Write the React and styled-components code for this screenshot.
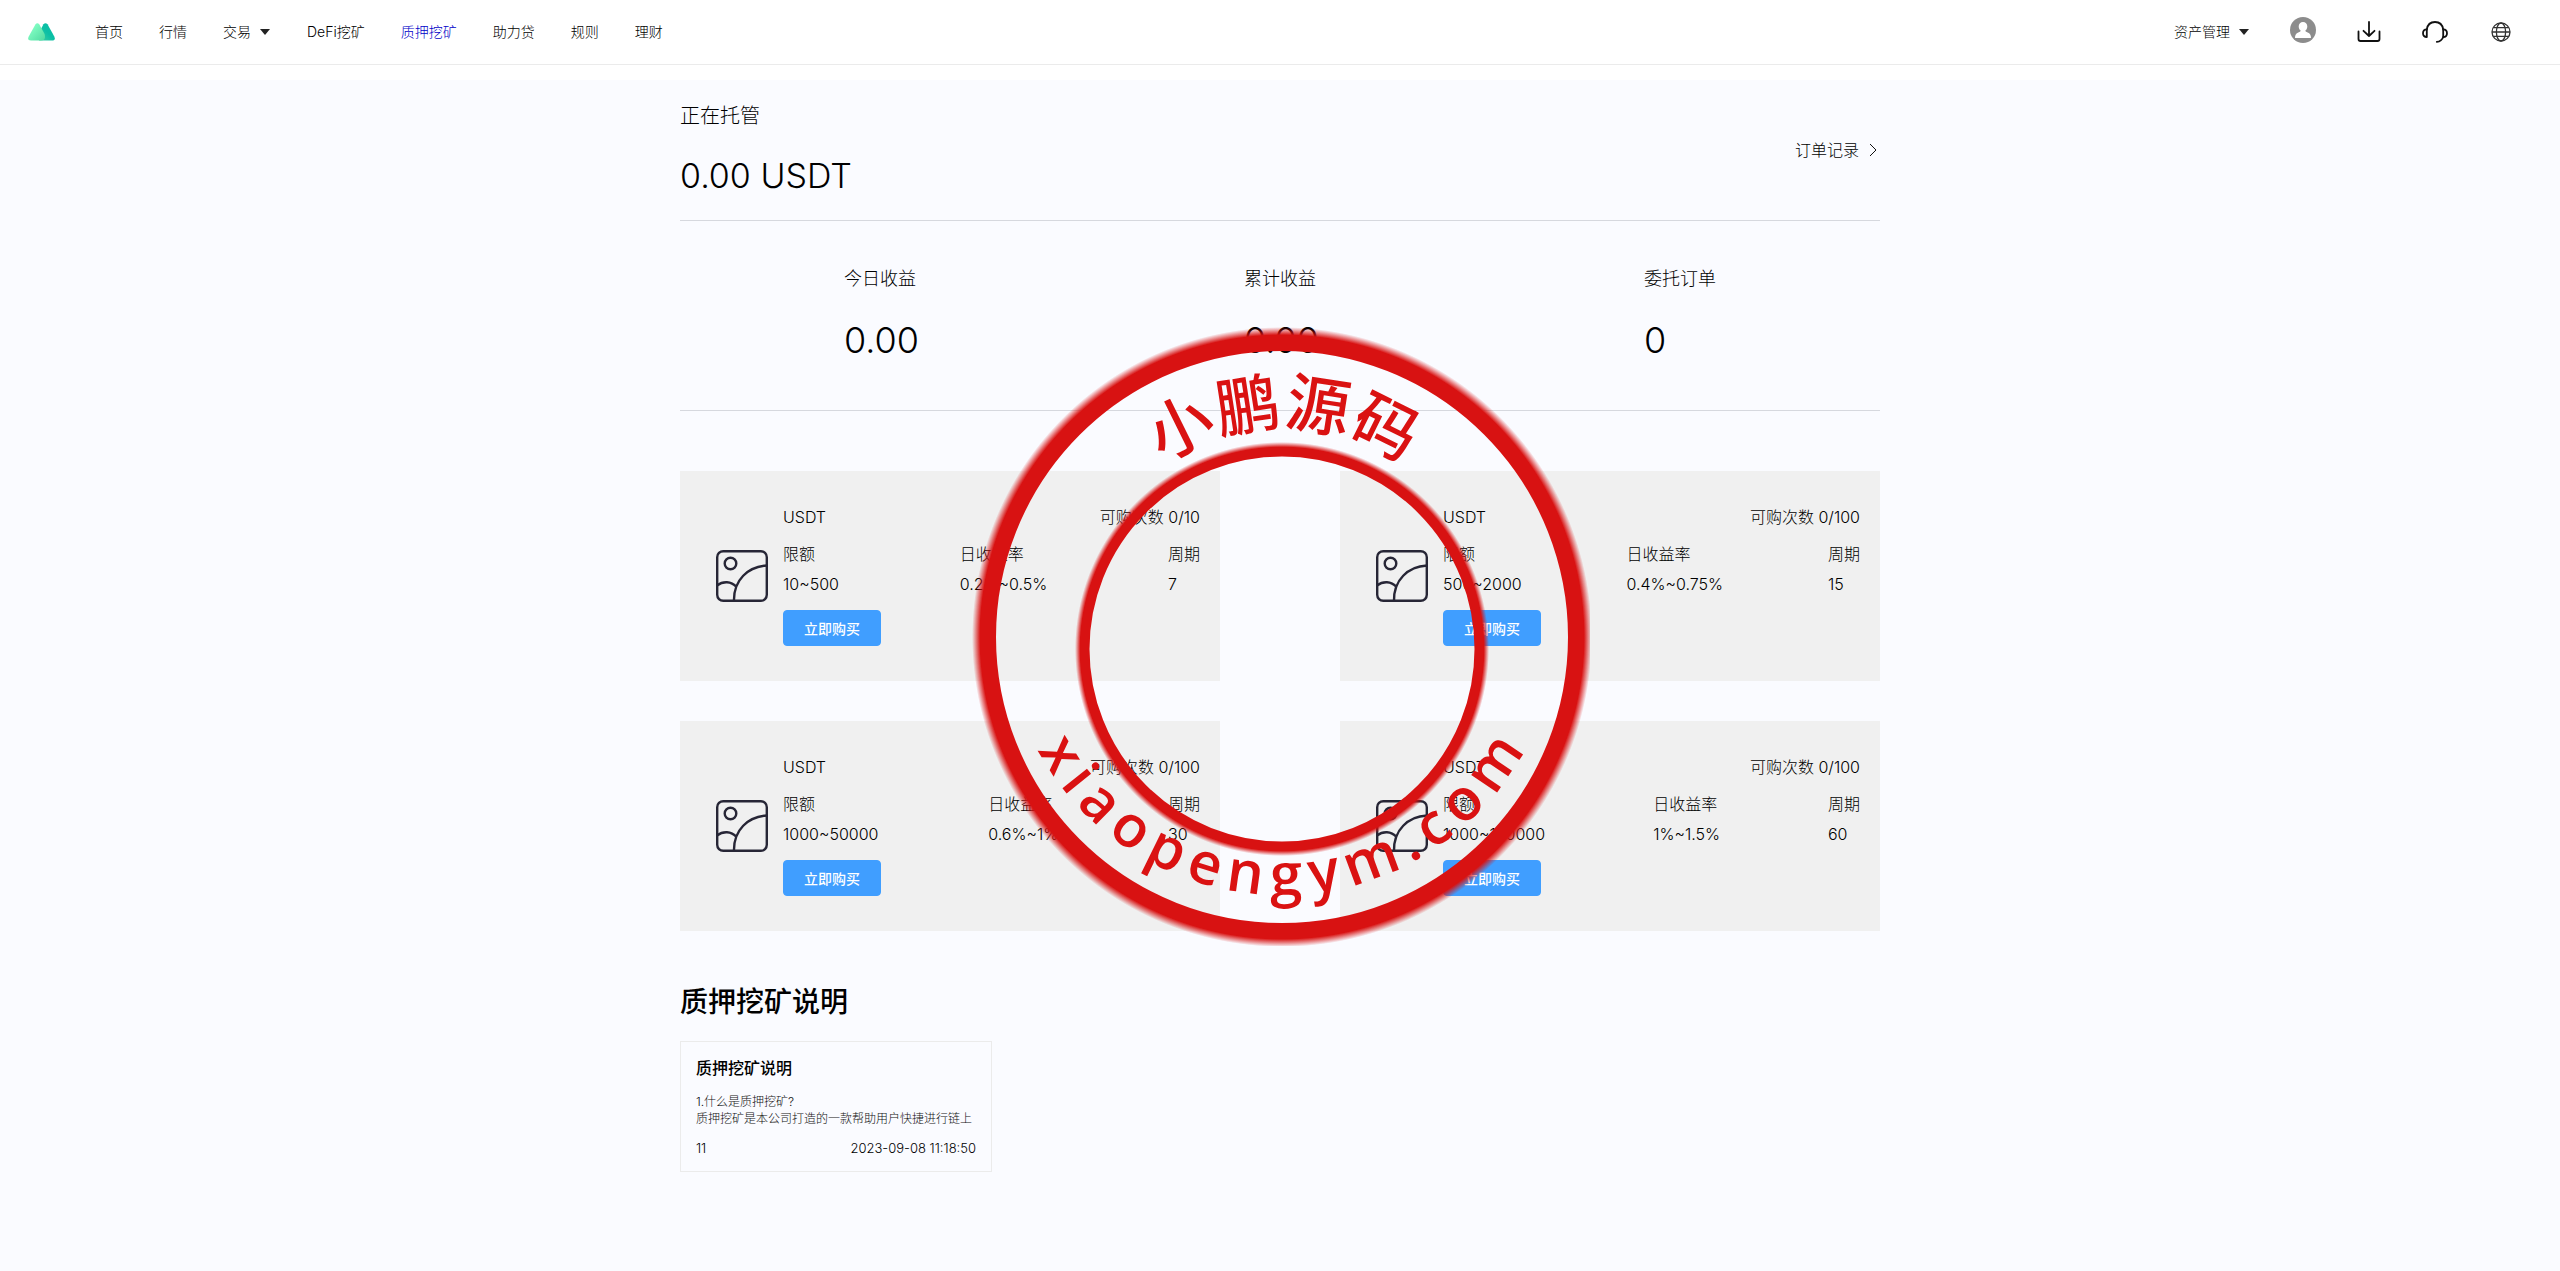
import React from "react"
import styled, { createGlobalStyle } from "styled-components"

const GlobalStyle = createGlobalStyle`
  * {
    box-sizing: border-box;
  }
  body {
    margin: 0;
    background-color: #fafbff;
    color: #000;
    font-family: Inter, "Noto Sans CJK SC", sans-serif;
    font-weight: 300;
    font-size: 16px;
  }
  h2, h3, p, dl, dt, dd {
    margin: 0;
  }
  a {
    color: inherit;
    text-decoration: none;
  }
`

const HeaderWrap = styled.header`
  background-color: #fff;
  padding-bottom: 15px;
`

const HeaderBar = styled.div`
  display: flex;
  justify-content: space-between;
  align-items: center;
  height: 65px;
  padding: 0 46px 0 28px;
  border-bottom: 1px solid #ebebeb;
`

const HeaderNav = styled.nav`
  display: flex;
  align-items: center;
  gap: 40px;
`

const NavList = styled.ul`
  display: flex;
  gap: 36px;
  list-style-type: none;
  margin: 0;
  padding: 0;
`

const NavLink = styled.a`
  display: flex;
  align-items: center;
  font-size: 14px;
  line-height: 20px;
  color: ${props => (props.$active ? "#0000c8" : "#000")};
`

const Caret = styled.span`
  width: 10px;
  margin: 0 1px 0 9px;
  border: 5px solid transparent;
  border-top: 6px solid #222;
  border-bottom: 0;
`

const HeaderTools = styled.div`
  display: flex;
  align-items: center;
  gap: 40px;
`

const ToolLink = styled.a`
  display: flex;
  justify-content: center;
  width: 26px;
`

const Main = styled.main`
  width: 100%;
  max-width: 1200px;
  margin: 0 auto;
  padding-bottom: 96px;
`

const Hosting = styled.section`
  display: flex;
  justify-content: space-between;
  align-items: center;
  padding: 21px 0;
  border-bottom: 1px solid #d6d8de;
`

const HostingLabel = styled.p`
  font-size: 20px;
  line-height: 30px;
`

const HostingValue = styled.p`
  margin-top: 22px;
  font-size: 34px;
  line-height: 46px;
`

const RecordLink = styled.a`
  display: flex;
  align-items: center;
  gap: 10px;
  padding-right: 3px;
  line-height: 24px;
`

const Stats = styled.dl`
  display: grid;
  grid-template-columns: repeat(3, 1fr);
  justify-items: center;
  padding: 44px 0 46px;
  border-bottom: 1px solid #d6d8de;
`

const Stat = styled.div`
  width: 72px;
  dt {
    font-size: 18px;
    line-height: 28px;
  }
  dd {
    margin-top: 24px;
    font-size: 36px;
    line-height: 47px;
  }
`

const Plans = styled.section`
  display: grid;
  grid-template-columns: 1fr 1fr;
  gap: 40px 120px;
  margin-top: 60px;
`

const Plan = styled.article`
  display: flex;
  align-items: center;
  height: 210px;
  padding: 0 20px 0 36px;
  background-color: #f0f0f0;
`

const PlanBody = styled.div`
  flex: 1;
  margin-left: 15px;
  padding-bottom: 2px;
`

const PlanRow = styled.div`
  display: flex;
  justify-content: space-between;
  line-height: 24px;
`

const PlanFields = styled.dl`
  display: flex;
  justify-content: space-between;
  margin-top: 10px;
  line-height: 30px;
`

const BuyButton = styled.button`
  display: block;
  height: 36px;
  margin-top: 11px;
  padding: 0 20px;
  border: 1px solid #409eff;
  border-radius: 4px;
  background-color: #409eff;
  color: #fff;
  font-family: inherit;
  font-size: 14px;
  font-weight: 500;
`

const GuideTitle = styled.h2`
  margin-top: 49px;
  font-size: 28px;
  font-weight: 500;
  line-height: 44px;
`

const GuideCard = styled.article`
  width: 312px;
  margin-top: 17px;
  padding: 14px 15px;
  border: 1px solid #ebebeb;
`

const GuideName = styled.h3`
  font-size: 16px;
  font-weight: 500;
  line-height: 24px;
`

const GuideText = styled.p`
  margin-top: 13px;
  font-size: 12px;
  line-height: 17px;
  color: #111;
`

const GuideMeta = styled.div`
  display: flex;
  justify-content: space-between;
  margin-top: 12px;
  font-size: 13px;
  line-height: 18px;
`

const StampLayer = styled.div`
  position: fixed;
  inset: 0;
  display: grid;
  place-items: center;
  pointer-events: none;
`

const StampText = styled.text`
  fill: #da1212;
  font-family: "Noto Sans CJK SC", sans-serif;
  font-weight: 500;
  font-size: ${props => props.$size}px;
`

const StampUrl = styled(StampText)`
  font-family: "Open Sans", "Noto Sans", sans-serif;
  font-weight: 600;
`

const navItems = [
  { label: "首页" },
  { label: "行情" },
  { label: "交易", caret: true },
  { label: "DeFi挖矿" },
  { label: "质押挖矿", active: true },
  { label: "助力贷" },
  { label: "规则" },
  { label: "理财" },
]

const stats = [
  { label: "今日收益", value: "0.00" },
  { label: "累计收益", value: "0.00" },
  { label: "委托订单", value: "0" },
]

const plans = [
  { times: "0/10", limit: "10~500", rate: "0.2%~0.5%", days: "7" },
  { times: "0/100", limit: "500~2000", rate: "0.4%~0.75%", days: "15" },
  { times: "0/100", limit: "1000~50000", rate: "0.6%~1%", days: "30" },
  { times: "0/100", limit: "1000~100000", rate: "1%~1.5%", days: "60" },
]

const Logo = () => (
  <svg width="27" height="18" viewBox="0 0 27 18">
    <defs>
      <linearGradient id="logoLeft" x1="0" y1="0" x2="1" y2="1">
        <stop offset="0.3" stopColor="#7dfac0" />
        <stop offset="1" stopColor="#4fd9a0" />
      </linearGradient>
      <linearGradient id="logoRight" x1="0" y1="1" x2="1" y2="0">
        <stop offset="0" stopColor="#3fd0a2" />
        <stop offset="0.5" stopColor="#0bbfa5" />
      </linearGradient>
    </defs>
    <path
      d="M15.5 1.2Q17.5-.8 19.5 1.2L26.3 13.4Q28 17.6 24 17.6H11L13 6Z"
      fill="url(#logoRight)"
    />
    <path
      d="M7.4 1.4Q9.4-1 11.4 1.4L16.6 11Q18.4 17.6 12.6 17.6H3Q-1.2 17.6.7 13.4Z"
      fill="url(#logoLeft)"
    />
  </svg>
)

const UserIcon = () => (
  <svg width="26" height="30" viewBox="0 0 26 30">
    <circle cx="13" cy="13" r="13" fill="#8c8c8c" />
    <path
      d="M13 5a4.3 4.3 0 0 1 4.3 4.4c0 1.800-.9 3.300-2 4.100.2 1 1 1.400 2.400 1.900 2.300.9 3.300 2.600 3.300 5.600H5c0-3 1-4.700 3.300-5.600 1.400-.5 2.200-.9 2.400-1.900-1.100-.8-2-2.300-2-4.100A4.300 4.300 0 0 1 13 5Z"
      fill="#fff"
    />
  </svg>
)

const DownloadIcon = () => (
  <svg
    width="24"
    height="22"
    viewBox="0 0 24 22"
    fill="none"
    stroke="#111"
    strokeWidth="1.8"
    strokeLinecap="round"
    strokeLinejoin="round"
  >
    <path d="M1.500 10.500V18q0 2 2 2h17q2 0 2-2v-7.500M12 1v14M6.500 9.800 12 15l5.500-5.200" />
  </svg>
)

const ServiceIcon = () => (
  <svg
    width="26"
    height="22"
    viewBox="0 0 26 22"
    fill="none"
    stroke="#111"
    strokeWidth="1.8"
    strokeLinecap="round"
    strokeLinejoin="round"
  >
    <path d="M4.800 8.500C5.500 3.800 8.800 1 13 1s7.500 2.800 8.200 7.500" />
    <path d="M4.800 8.300v7.700C2.400 16 1 14.600 1 12.200s1.400-3.900 3.800-3.900ZM21.200 8.300V16c2.400 0 3.800-1.400 3.800-3.800s-1.400-3.900-3.800-3.900Z" />
    <path d="M21.200 16c-1 2.900-3.200 4.600-6.400 4.900" />
  </svg>
)

const GlobeIcon = () => (
  <svg
    width="20"
    height="20"
    viewBox="0 0 20 20"
    fill="none"
    stroke="#333"
    strokeWidth="1.3"
  >
    <circle cx="10" cy="10" r="9" />
    <ellipse cx="10" cy="10" rx="4.600" ry="9" />
    <path d="M2.500 5.600h15M1 10h18M2.500 14.400h15" />
  </svg>
)

const ArrowIcon = () => (
  <svg width="8" height="14" viewBox="0 0 8 14" fill="none" stroke="#111">
    <path d="M1 1l6 6-6 6" />
  </svg>
)

const CoinImage = () => (
  <svg
    width="52"
    height="52"
    viewBox="0 0 52 52"
    fill="none"
    stroke="#272636"
    strokeWidth="2.4"
  >
    <rect x="1.200" y="1.200" width="49.600" height="49.600" rx="6" />
    <circle cx="14.500" cy="13.500" r="5.800" />
    <path d="M51 15.500C32 16.500 17.500 30 18 51M1 35.500c6-4.500 14-4.500 19.500 1.500" />
  </svg>
)

const Stamp = () => {
  const url = "xiaopengym.com"
  // the web address is set with a 9px gap between its letters
  const gaps = url
    .split("")
    .map((_, i) => (i ? 9 : 0))
    .join(" ")

  return (
    <svg width="620" height="620" viewBox="0 0 620 620">
      <defs>
        <radialGradient
          id="outerRing"
          gradientUnits="userSpaceOnUse"
          cx="312"
          cy="311"
          r="310"
        >
          <stop offset="0.974" stopColor="#d81212" />
          <stop offset="1" stopColor="#d81212" stopOpacity="0" />
        </radialGradient>
        <radialGradient
          id="innerRing"
          gradientUnits="userSpaceOnUse"
          cx="312"
          cy="323"
          r="207"
        >
          <stop offset="0.975" stopColor="#d81212" />
          <stop offset="1" stopColor="#d81212" stopOpacity="0" />
        </radialGradient>
        <path id="nameArc" d="M104 309a209 209 0 0 1 418 0" />
        <path id="urlArc" d="M34 292a277 277 0 0 0 554 0" />
      </defs>
      <circle
        cx="312"
        cy="311"
        r="298"
        fill="none"
        stroke="url(#outerRing)"
        strokeWidth="24"
      />
      <circle
        cx="312"
        cy="323"
        r="200"
        fill="none"
        stroke="url(#innerRing)"
        strokeWidth="15"
      />
      <StampText $size={64} textAnchor="middle">
        <textPath href="#nameArc" startOffset="50%">
          小鹏源码
        </textPath>
      </StampText>
      <StampUrl $size={58} textAnchor="middle">
        <textPath href="#urlArc" startOffset="50%">
          <tspan dx={gaps}>{url}</tspan>
        </textPath>
      </StampUrl>
    </svg>
  )
}

const Header = () => (
  <HeaderWrap>
    <HeaderBar>
      <HeaderNav>
        <Logo />
        <NavList>
          {navItems.map(item => (
            <li key={item.label}>
              <NavLink href="#" $active={item.active}>
                {item.label}
                {item.caret && <Caret />}
              </NavLink>
            </li>
          ))}
        </NavList>
      </HeaderNav>
      <HeaderTools>
        <NavLink href="#">
          资产管理
          <Caret />
        </NavLink>
        <ToolLink href="#" aria-label="user">
          <UserIcon />
        </ToolLink>
        <ToolLink href="#" aria-label="download">
          <DownloadIcon />
        </ToolLink>
        <ToolLink href="#" aria-label="service">
          <ServiceIcon />
        </ToolLink>
        <ToolLink href="#" aria-label="language">
          <GlobeIcon />
        </ToolLink>
      </HeaderTools>
    </HeaderBar>
  </HeaderWrap>
)

const App = () => {
  return (
    <>
      <GlobalStyle />
      <Header />
      <Main>
        <Hosting>
          <div>
            <HostingLabel>正在托管</HostingLabel>
            <HostingValue>0.00 USDT</HostingValue>
          </div>
          <RecordLink href="#">
            订单记录
            <ArrowIcon />
          </RecordLink>
        </Hosting>
        <Stats>
          {stats.map(stat => (
            <Stat key={stat.label}>
              <dt>{stat.label}</dt>
              <dd>{stat.value}</dd>
            </Stat>
          ))}
        </Stats>
        <Plans>
          {plans.map(plan => (
            <Plan key={plan.limit}>
              <CoinImage />
              <PlanBody>
                <PlanRow>
                  <span>USDT</span>
                  <span>可购次数 {plan.times}</span>
                </PlanRow>
                <PlanFields>
                  <div>
                    <dt>限额</dt>
                    <dd>{plan.limit}</dd>
                  </div>
                  <div>
                    <dt>日收益率</dt>
                    <dd>{plan.rate}</dd>
                  </div>
                  <div>
                    <dt>周期</dt>
                    <dd>{plan.days}</dd>
                  </div>
                </PlanFields>
                <BuyButton type="button">立即购买</BuyButton>
              </PlanBody>
            </Plan>
          ))}
        </Plans>
        <GuideTitle>质押挖矿说明</GuideTitle>
        <GuideCard>
          <GuideName>质押挖矿说明</GuideName>
          <GuideText>
            1.什么是质押挖矿?
            <br />
            质押挖矿是本公司打造的一款帮助用户快捷进行链上
          </GuideText>
          <GuideMeta>
            <span>11</span>
            <time>2023-09-08 11:18:50</time>
          </GuideMeta>
        </GuideCard>
      </Main>
      <StampLayer>
        <Stamp />
      </StampLayer>
    </>
  )
}

export default App
